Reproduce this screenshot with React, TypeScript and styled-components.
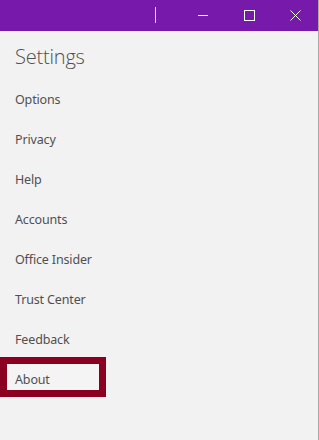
import styled, { createGlobalStyle } from 'styled-components';

const GlobalStyle = createGlobalStyle`
  html, body {
    margin: 0;
    padding: 0;
    background: #f2f2f2;
  }
  body {
    font-family: "Segoe UI", "Noto Sans", "Open Sans", sans-serif;
  }
`;

const Window = styled.div`
  width: 318px;
  height: 440px;
  background: #f2f2f2;
  border-right: 1px solid #a8a8a8;
  display: flex;
  flex-direction: column;
  overflow: hidden;
`;

const TitleBar = styled.div`
  height: 31px;
  background: #7719aa;
  display: flex;
  align-items: stretch;
  justify-content: flex-end;
  flex-shrink: 0;
`;

const Divider = styled.div`
  width: 1px;
  height: 16px;
  margin-top: 7px;
  margin-right: 24px;
  background: #e6d4f0;
`;

const CaptionButton = styled.div`
  width: 46px;
  display: flex;
  align-items: center;
  justify-content: center;
  color: #ffffff;
`;

const Heading = styled.h1`
  margin: 0;
  height: 48px;
  padding: 12px 0 0 15px;
  box-sizing: border-box;
  font-family: "Open Sans", "Noto Sans", sans-serif;
  font-size: 20px;
  font-weight: 300;
  letter-spacing: -0.2px;
  color: #505050;
  line-height: 28px;
`;

const Menu = styled.div`
  display: flex;
  flex-direction: column;
`;

const Item = styled.div<{ $active?: boolean }>`
  height: 40px;
  box-sizing: border-box;
  padding-left: 15px;
  display: flex;
  align-items: center;
  font-size: 12.5px;
  letter-spacing: -0.15px;
  color: #505050;

  ${p =>
    p.$active &&
    `
    width: 106px;
    margin-top: -2px;
    margin-bottom: 2px;
    padding-left: 8px;
    padding-top: 4px;
    border: 7px solid #8b0021;
    background: #f4f4f4;
  `}
`;

const items = ['Options', 'Privacy', 'Help', 'Accounts', 'Office Insider', 'Trust Center', 'Feedback', 'About'];

export default function App() {
  return (
    <>
      <GlobalStyle />
      <Window>
        <TitleBar>
          <Divider />
          <CaptionButton>
            <svg width="11" height="11" viewBox="0 0 11 11">
              <path d="M0 5.5h10" stroke="#fff" strokeWidth="1" />
            </svg>
          </CaptionButton>
          <CaptionButton>
            <svg width="11" height="11" viewBox="0 0 11 11">
              <rect x="0.5" y="0.5" width="10" height="10" fill="none" stroke="#fff" strokeWidth="1" />
            </svg>
          </CaptionButton>
          <CaptionButton>
            <svg width="11" height="11" viewBox="0 0 11 11">
              <path d="M0.5 0.5l10 10M10.5 0.5l-10 10" stroke="#fff" strokeWidth="1" />
            </svg>
          </CaptionButton>
        </TitleBar>
        <Heading>Settings</Heading>
        <Menu>
          {items.map(label => (
            <Item key={label} $active={label === 'About'}>
              {label}
            </Item>
          ))}
        </Menu>
      </Window>
    </>
  );
}
